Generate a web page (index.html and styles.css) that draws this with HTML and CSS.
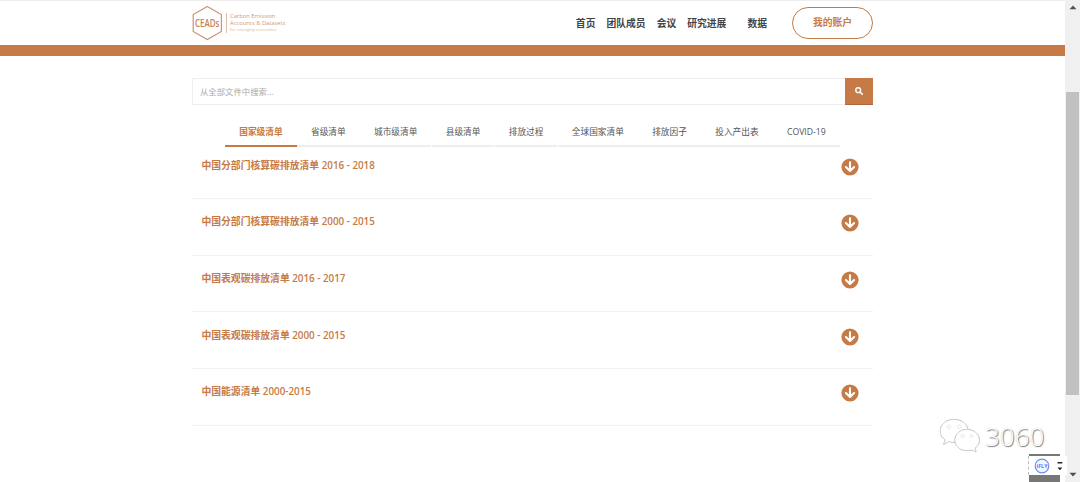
FILE: index.html
```html
<!DOCTYPE html>
<html lang="zh-CN">
<head>
    <meta charset="UTF-8">
    <meta name="viewport" content="width=device-width, initial-scale=1.0">
    <title>CEADs</title>
    <link rel="stylesheet" href="styles.css">
</head>
<body>
    <svg width="0" height="0" class="defs">
        <symbol id="arrow-down" viewBox="0 0 18 18">
            <circle cx="9" cy="9" r="8.6" fill="#c67a45"/>
            <path d="M9 4.3v8.6M4.9 9l4.1 4.1L13.1 9" fill="none" stroke="#fff" stroke-width="2.1" stroke-linecap="round" stroke-linejoin="round"/>
        </symbol>
    </svg>

    <div class="page">
        <!-- Header -->
        <header class="header">
            <div class="container header-inner">
                <a class="logo">
                    <svg width="31" height="36" viewBox="0 0 31 36">
                        <path d="M15.3 1.5L29.4 9.6V26.4L15.3 34.5L1.2 26.4V9.6Z" fill="none" stroke="#cf9272" stroke-width="1.2"/>
                        <text x="3" y="21.5" textLength="24.5" lengthAdjust="spacingAndGlyphs" class="logo-mark">CEADs</text>
                    </svg>
                    <span class="logo-text">
                        <span>Carbon Emission</span>
                        <span>Accounts &amp; Datasets</span>
                        <small>for emerging economies</small>
                    </span>
                </a>
                <nav class="nav">
                    <a>首页</a>
                    <a>团队成员</a>
                    <a>会议</a>
                    <a>研究进展</a>
                    <a class="nav-data">数据</a>
                    <a class="account-btn">我的账户</a>
                </nav>
            </div>
        </header>

        <main class="container">
            <!-- Search -->
            <form class="search">
                <input type="text" class="search-input" placeholder="从全部文件中搜索...">
                <button type="button" class="search-btn">
                    <svg width="8" height="8" viewBox="0 0 8 8">
                        <circle cx="3.2" cy="3.2" r="2.4" fill="none" stroke="#fff" stroke-width="1.4"/>
                        <path d="M5.1 5.1L7.3 7.3" stroke="#fff" stroke-width="1.6" stroke-linecap="round"/>
                    </svg>
                </button>
            </form>

            <!-- Tabs -->
            <div class="tabs">
                <a class="tab active">国家级清单</a>
                <a class="tab">省级清单</a>
                <a class="tab">城市级清单</a>
                <a class="tab">县级清单</a>
                <a class="tab">排放过程</a>
                <a class="tab">全球国家清单</a>
                <a class="tab">排放因子</a>
                <a class="tab">投入产出表</a>
                <a class="tab">COVID-19</a>
            </div>

            <!-- File list -->
            <div class="file-list">
                <div class="file"><h3>中国分部门核算碳排放清单 2016 - 2018</h3><svg class="download"><use href="#arrow-down"/></svg></div>
                <div class="file"><h3>中国分部门核算碳排放清单 2000 - 2015</h3><svg class="download"><use href="#arrow-down"/></svg></div>
                <div class="file"><h3>中国表观碳排放清单 2016 - 2017</h3><svg class="download"><use href="#arrow-down"/></svg></div>
                <div class="file"><h3>中国表观碳排放清单 2000 - 2015</h3><svg class="download"><use href="#arrow-down"/></svg></div>
                <div class="file"><h3>中国能源清单 2000-2015</h3><svg class="download"><use href="#arrow-down"/></svg></div>
            </div>
        </main>
    </div>

    <!-- Scrollbar -->
    <div class="scrollbar">
        <svg width="8" height="5" viewBox="0 0 8 5"><path d="M4 .5L7.5 4.3H.5Z" fill="#505050"/></svg>
        <div class="track"><div class="thumb"></div></div>
        <svg width="8" height="5" viewBox="0 0 8 5"><path d="M4 4.5L7.5 .7H.5Z" fill="#505050"/></svg>
    </div>

    <!-- Watermark -->
    <div class="watermark">
        <svg width="42" height="36" viewBox="0 0 42 36" fill="#fff" stroke-width=".7" stroke-linejoin="round">
            <g class="bubble">
                <path d="M15 1.500C7 1.500 1.300 6.600 1.300 13C1.300 16.800 3.200 19.800 6.200 21.800L4.800 26.200L10 23.400C12 24.100 14 24.300 16 24.200C23.500 24 29 19 29 13C29 6.600 23 1.500 15 1.500Z"/>
                <circle cx="10" cy="8.700" r="1.700"/>
                <circle cx="20.500" cy="8.700" r="1.700"/>
            </g>
            <g class="bubble">
                <path d="M28 11.500C20.800 11.500 16 16.200 16 22C16 28 21 32.500 28 32.500C30 32.500 31.500 32.200 33 31.700L37 34L36 30C39 28 40.300 25.200 40.300 22C40.300 16.200 35 11.500 28 11.500Z"/>
                <circle cx="23.500" cy="18" r="1.500"/>
                <circle cx="32.500" cy="18" r="1.500"/>
            </g>
        </svg>
        <span>3060</span>
    </div>

    <!-- Input method bar -->
    <div class="ime">
        <div class="ime-bar">
            <svg width="16" height="16" viewBox="0 0 16 16">
                <circle cx="8" cy="8" r="6.800" fill="#f3f6ff" stroke="#6d8ff5" stroke-width="1.200"/>
                <text x="2.500" y="10" textLength="11" lengthAdjust="spacingAndGlyphs" class="ime-text">iFLY</text>
            </svg>
            <svg width="6" height="10" viewBox="0 0 6 10"><path d="M.5 1h4.800v1.500H.5ZM.5 6.500h4.800L2.900 9.200Z" fill="#222"/></svg>
        </div>
    </div>
</body>
</html>
```
FILE: styles.css
```css
* {
    margin: 0;
    padding: 0;
    box-sizing: border-box;
}

body {
    display: flex;
    width: 1080px;
    height: 482px;
    overflow: hidden;
    position: relative;
    background: #fff;
    color: #444;
    font-family: "Open Sans", "Noto Sans CJK SC", sans-serif;
}

.defs {
    position: absolute;
}

.page {
    flex: 1;
    border-top: 1px solid #eee;
}

.container {
    width: 681px;
    margin: 0 auto;
}

/* Header */
.header {
    height: 55px;
    border-bottom: 11px solid #c67a45;
}

.header-inner {
    display: flex;
    justify-content: space-between;
    align-items: center;
    height: 44px;
}

.logo {
    display: flex;
    align-items: center;
}

.logo-mark {
    font: 600 10px "Open Sans", sans-serif;
    fill: #c8805a;
}

.logo-text {
    display: flex;
    flex-direction: column;
    margin-left: 3px;
    padding-left: 3px;
    border-left: 1px solid #e3bfaa;
    font-size: 5.8px;
    line-height: 6.6px;
    color: #d09a7c;
    white-space: nowrap;
}

.logo-text small {
    font-size: 4.1px;
    line-height: 6px;
    color: #deb49d;
}

.nav {
    display: flex;
    align-items: center;
    gap: 11px;
    font-size: 9.8px;
    font-weight: 600;
    color: #444;
}

.nav-data {
    margin-left: 10px;
}

.account-btn {
    width: 81px;
    height: 32px;
    margin-left: 14px;
    line-height: 30px;
    text-align: center;
    border: 1px solid #c67a45;
    border-radius: 16px;
    color: #c67a45;
}

/* Search */
.search {
    display: flex;
    height: 27px;
    margin-top: 22px;
}

.search-input {
    flex: 1;
    padding: 0 7px;
    border: 1px solid #eee;
    border-right: none;
    outline: none;
    font-family: inherit;
    font-size: 8.4px;
}

.search-input::placeholder {
    color: #aaa;
}

.search-btn {
    width: 28px;
    border: none;
    border-bottom: 1px solid #b0683a;
    background: #c67a45;
}

.search-btn svg {
    display: block;
    margin: 0 auto;
}

/* Tabs */
.tabs {
    display: flex;
    justify-content: center;
    height: 31px;
    margin-top: 11px;
    gap: 0.5px;
}

.tab {
    padding: 1px 13.9px 0;
    border-bottom: 2px solid #eee;
    font-size: 8.7px;
    line-height: 30px;
    color: #555;
    white-space: nowrap;
}

.tab.active {
    border-bottom-color: #c67a45;
    color: #c67a45;
    font-weight: 600;
}

/* File list */
.file-list {
    margin-top: -4.6px;
}

.file {
    display: flex;
    justify-content: space-between;
    height: 56.65px;
    padding: 15.4px 14px 0 9.4px;
    border-bottom: 1px solid #f2f2f2;
}

.file h3 {
    font-size: 9.82px;
    font-weight: 600;
    line-height: 16px;
    color: #c67a45;
}

.download {
    width: 18px;
    height: 18px;
}

/* Scrollbar */
.scrollbar {
    display: flex;
    flex-direction: column;
    align-items: center;
    width: 15px;
    padding: 5px 0;
    background: #f0f0f0;
}

.track {
    flex: 1;
    padding-top: 82px;
}

.thumb {
    width: 13px;
    height: 303px;
    background: #c1c1c1;
}

/* Watermark */
.watermark {
    display: flex;
    align-items: center;
    gap: 4px;
    position: absolute;
    left: 939px;
    top: 417px;
    font-size: 26px;
    line-height: 38px;
    color: #fff;
    text-shadow: 1px 1px 1px #777, 0 0 1px #ccc;
}

.watermark span {
    font-weight: 300;
}

.bubble {
    stroke: #ddd;
    filter: drop-shadow(0.6px 0.8px 0.4px #777);
}

/* Input method bar */
.ime {
    position: absolute;
    left: 1029px;
    top: 454px;
    width: 31px;
    height: 28px;
    background: #777;
}

.ime-bar {
    display: flex;
    align-items: center;
    justify-content: space-between;
    width: 39px;
    height: 19px;
    margin-top: 2px;
    margin-left: -1px;
    padding: 0 4px 0 5px;
    border-left: 1px dashed #bbb;
    background: #fff;
}

.ime-text {
    font: bold 5px "Open Sans", sans-serif;
    fill: #5b80f0;
}
```
